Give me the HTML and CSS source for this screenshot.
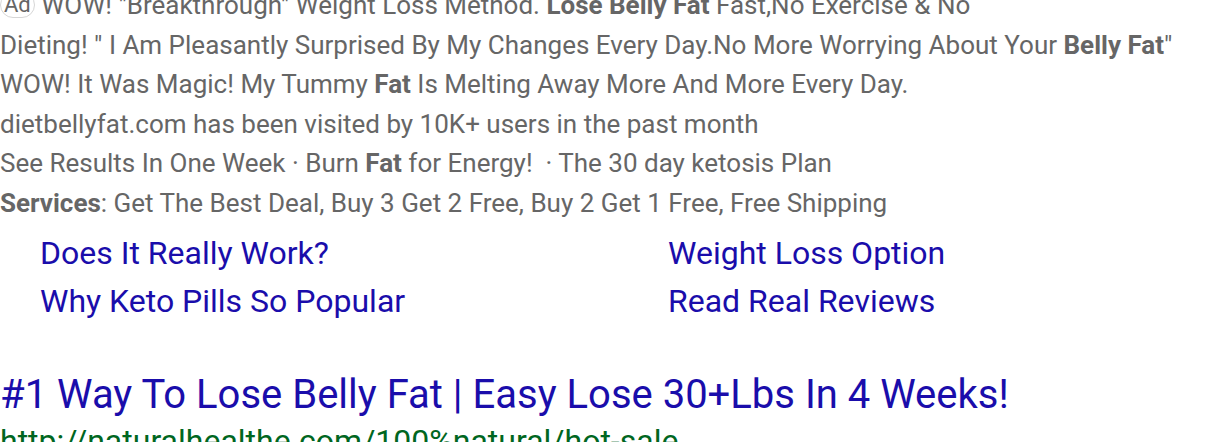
FILE: index.html
```html
<!DOCTYPE html>
<html>
<head>
<meta charset="utf-8">
<link rel="stylesheet" href="styles.css">
</head>
<body>
<div class="ad">
  <div class="desc">
    <p class="line"><span class="badge">Ad</span> WOW! "Breakthrough" Weight Loss Method. <b>Lose Belly Fat</b> Fast,No Exercise &amp; No<br>Dieting! " I Am Pleasantly Surprised By My Changes Every Day.No More Worrying About Your <b>Belly Fat</b>"</p>
    <p class="line">WOW! It Was Magic! My Tummy <b>Fat</b> Is Melting Away More And More Every Day.</p>
    <p class="line">dietbellyfat.com has been visited by 10K+ users in the past month</p>
    <p class="line">See Results In One Week · Burn <b>Fat</b> for Energy! &nbsp;· The 30 day ketosis Plan</p>
    <p class="line"><b>Services</b>: Get The Best Deal, Buy 3 Get 2 Free, Buy 2 Get 1 Free, Free Shipping</p>
  </div>
  <div class="sitelinks">
    <a href="#">Does It Really Work?</a>
    <a href="#">Weight Loss Option</a>
    <a href="#">Why Keto Pills So Popular</a>
    <a href="#">Read Real Reviews</a>
  </div>
</div>
<div class="result">
  <h3 class="title"><a href="#">#1 Way To Lose Belly Fat | Easy Lose 30+Lbs In 4 Weeks!</a></h3>
  <div class="url">http://naturalhealthe.com/100%natural/hot-sale</div>
</div>
</body>
</html>
```
FILE: styles.css
```css
html, body {
  margin: 0;
  padding: 0;
  background: #fff;
  overflow: hidden;
}
body {
  font-family: Roboto, "Liberation Sans", Arial, sans-serif;
  width: 1216px;
  height: 442px;
}
.ad {
  margin-top: -14px;
}
.desc {
  width: 1216px;
  color: #666;
  font-size: 26px;
  line-height: 39.6px;
  white-space: nowrap;
}
.line {
  margin: 0;
}
.line b {
  font-weight: 700;
  color: #666;
}
.badge {
  display: inline-block;
  border: 1.5px solid #d6d6d6;
  border-radius: 14px;
  padding: 0 3px;
  line-height: 24px;
  font-size: 22px;
  color: #666;
  vertical-align: 2px;
}
.sitelinks {
  display: grid;
  grid-template-columns: 628px 1fr;
  padding-left: 40px;
  margin-top: 5px;
}
.sitelinks a {
  color: #1a0dab;
  text-decoration: none;
  font-size: 32px;
  line-height: 48px;
}
.result {
  margin-top: 46px;
}
.title {
  margin: 0;
  font-weight: 400;
  font-size: 40px;
  line-height: 47px;
}
.title a {
  color: #1a0dab;
  text-decoration: none;
}
.url {
  color: #006621;
  font-size: 32px;
  line-height: 46px;
}
```
